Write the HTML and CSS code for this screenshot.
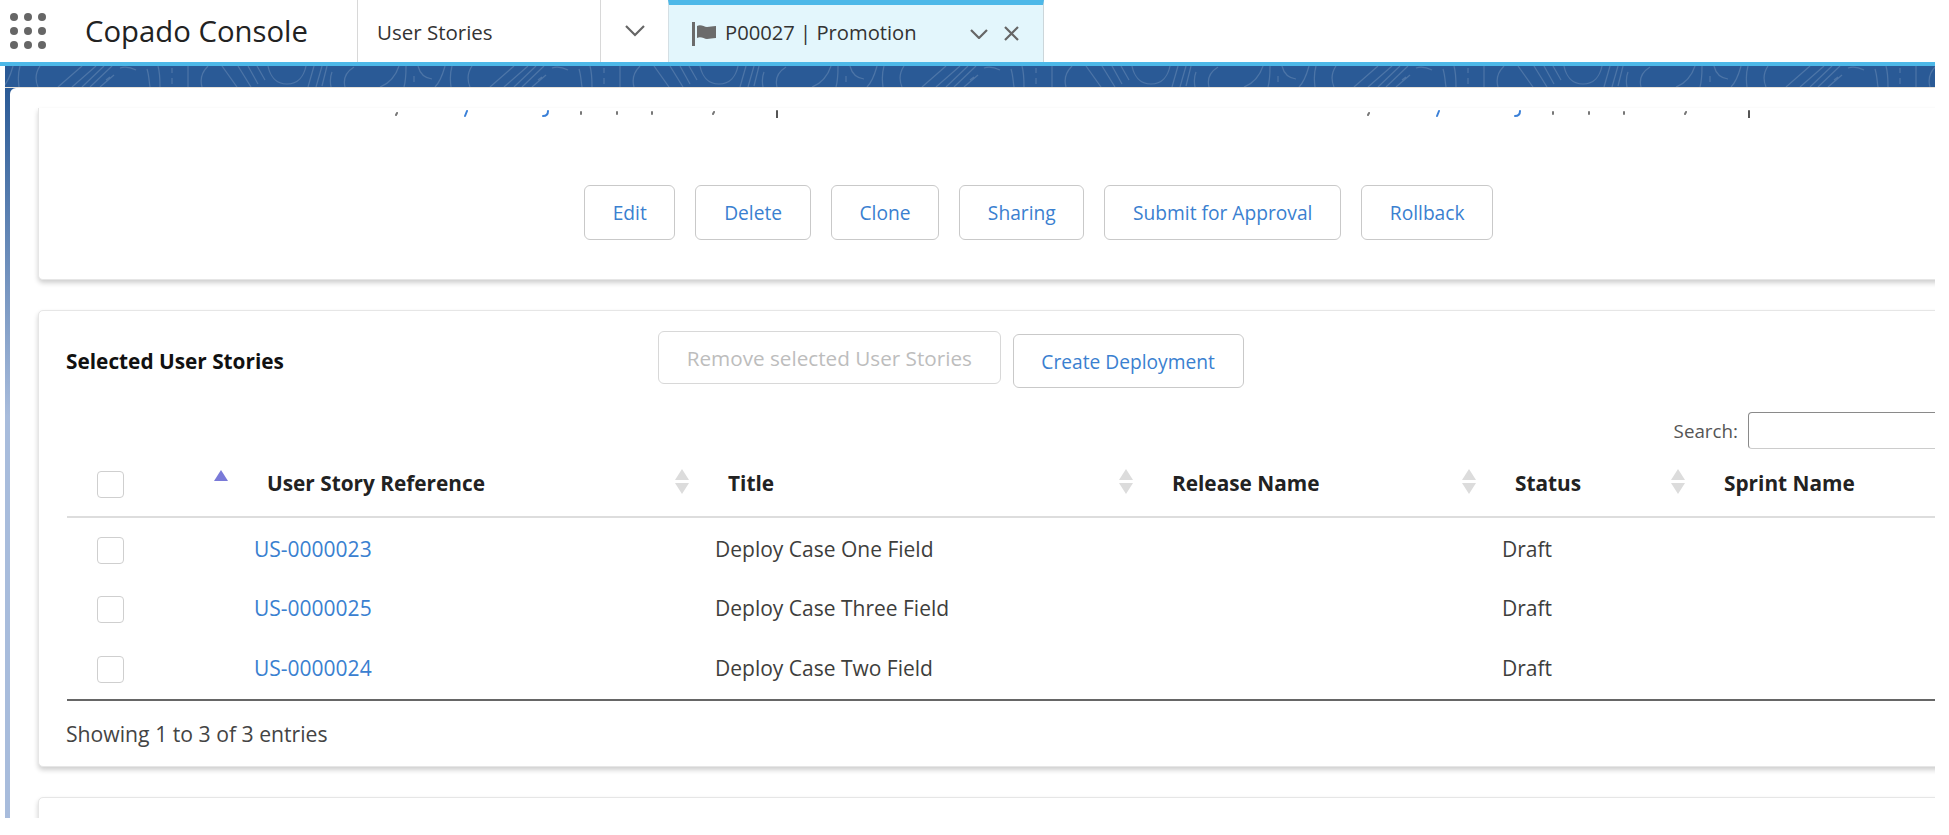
FILE: index.html
```html
<!DOCTYPE html>
<html lang="en">
<head>
  <meta charset="UTF-8">
  <title>P00027 | Promotion</title>
  <link rel="stylesheet" href="styles.css">
</head>
<body>
<div class="page">

  <!-- TAB BAR -->
  <div class="tabbar">
    <div class="brand">
      <svg class="launcher" width="38" height="36" viewBox="0 0 38 36" fill="#666">
        <circle cx="5" cy="4" r="4"/><circle cx="19" cy="4" r="4"/><circle cx="33" cy="4" r="4"/>
        <circle cx="5" cy="18" r="4"/><circle cx="19" cy="18" r="4"/><circle cx="33" cy="18" r="4"/>
        <circle cx="5" cy="32" r="4"/><circle cx="19" cy="32" r="4"/><circle cx="33" cy="32" r="4"/>
      </svg>
      <span class="app-name">Copado Console</span>
    </div>
    <div class="nav-tab">User Stories</div>
    <div class="nav-menu">
      <svg width="20" height="12" viewBox="0 0 20 12" fill="none" stroke="#666" stroke-width="2.2"><path d="M1 1l9 9 9-9"/></svg>
    </div>
    <div class="record-tab">
      <svg class="flag" width="25" height="24" viewBox="0 0 25 24">
        <rect x="0" y="0" width="3" height="24" fill="#6b6b6b"/>
        <path d="M5 4c4-2 7 1 10 1s5-1 9-1v12c-4 0-6 1-9 1s-6-3-10-1z" fill="#6b6b6b"/>
      </svg>
      <span class="record-title">P00027 | Promotion</span>
      <svg class="record-menu" width="18" height="10" viewBox="0 0 18 10" fill="none" stroke="#666" stroke-width="2.2"><path d="M1 1l8 8 8-8"/></svg>
      <svg width="15" height="15" viewBox="0 0 15 15" fill="none" stroke="#666" stroke-width="2.2"><path d="M1 1l13 13M14 1L1 14"/></svg>
    </div>
  </div>

  <!-- CONTOUR BAND -->
  <svg class="band" width="100%" height="21">
    <defs>
      <pattern id="contour" x="-5" width="432" height="21" patternUnits="userSpaceOnUse">
        <g fill="none" stroke="#fff" stroke-opacity=".16" stroke-width="1.2">
          <path d="M3 21c6-6 8-14 10-21M20 0c-2 7-2 14-1 21M40 0c-4 6-5 14-2 21"/>
          <path d="M58 21L82 0M72 21L96 0M82 21L104 0M90 21L112 0M100 21l14-12"/>
          <path d="M120 2c6-2 10-1 16 2M106 14l4-3"/>
          <path d="M147 3c2 6 2 12 3 18M158 0c2 7 2 14 2 21M172 2v5M172 12v6M188 0v21M208 0c-6 6-8 14-6 21"/>
          <path d="M222 0l15 21M238 0l13 21M248 0l10 18M257 0l8 14"/>
          <path d="M268 0c2 10 8 18 19 18s17-8 19-18"/>
          <path d="M308 21l6-21M316 21l6-21M322 20l5-20M332 6c-2 5-2 10-1 15M345 21c-2-8 1-15 9-20"/>
          <path d="M380 21c10-4 16-12 19-21M404 21c2-7 2-14 2-21M414 10v6"/>
          <path d="M418 0c2 8 7 12 14 13"/>
        </g>
      </pattern>
    </defs>
    <rect width="100%" height="21" fill="url(#contour)"/>
  </svg>

  <div class="workspace">
    <div class="content">

      <div class="card card-record">
        <!-- tails of the field line scrolled off above -->
        <svg class="tails" width="1800" height="10" viewBox="0 0 1800 10" fill="none" stroke-width="2" stroke-linecap="round">
          <g id="tails">
            <path d="M358 5l-1 2M542 4v2M578 4v2M613 4v2M675 4l-1 2" stroke="#777"/>
            <path d="M428 3l-2 5M509 3c0 3-2 5-5 5" stroke="#3a80d8"/>
            <path d="M738 3v7" stroke="#555"/>
          </g>
          <use href="#tails" x="972"/>
        </svg>
        <div class="record-actions">
          <button class="btn">Edit</button>
          <button class="btn">Delete</button>
          <button class="btn">Clone</button>
          <button class="btn">Sharing</button>
          <button class="btn">Submit for Approval</button>
          <button class="btn">Rollback</button>
        </div>
      </div>

      <div class="card card-stories">
        <div class="stories-head">
          <h2 class="stories-title">Selected User Stories</h2>
          <button class="btn btn-disabled" disabled>Remove selected User Stories</button>
          <button class="btn btn-create">Create Deployment</button>
        </div>
        <div class="search">
          <label for="storySearch">Search:</label>
          <input id="storySearch" type="text">
        </div>
        <table class="stories">
          <colgroup>
            <col class="col-check"><col class="col-ref"><col class="col-title">
            <col class="col-release"><col class="col-status"><col class="col-sprint">
          </colgroup>
          <thead>
            <tr>
              <th class="check sort-asc"><span class="box"></span></th>
              <th class="sortable">User Story Reference</th>
              <th class="sortable">Title</th>
              <th class="sortable">Release Name</th>
              <th class="sortable">Status</th>
              <th>Sprint Name</th>
            </tr>
          </thead>
          <tbody>
            <tr>
              <td class="check"><span class="box"></span></td>
              <td><a href="#">US-0000023</a></td>
              <td>Deploy Case One Field</td>
              <td></td>
              <td>Draft</td>
              <td></td>
            </tr>
            <tr>
              <td class="check"><span class="box"></span></td>
              <td><a href="#">US-0000025</a></td>
              <td>Deploy Case Three Field</td>
              <td></td>
              <td>Draft</td>
              <td></td>
            </tr>
            <tr>
              <td class="check"><span class="box"></span></td>
              <td><a href="#">US-0000024</a></td>
              <td>Deploy Case Two Field</td>
              <td></td>
              <td>Draft</td>
              <td></td>
            </tr>
          </tbody>
        </table>
        <div class="table-info">Showing 1 to 3 of 3 entries</div>
      </div>

      <div class="card card-next"></div>

    </div>
  </div>
</div>
</body>
</html>
```

FILE: styles.css
```css
* { margin: 0; padding: 0; box-sizing: border-box; }

body {
  background-color: #fff;
  font-family: "Open Sans", "Noto Sans", sans-serif;
  color: #3e3e3c;
}

.page {
  width: 1935px;
  height: 818px;
  overflow: hidden;
}

/* tab bar */
.tabbar {
  display: flex;
  height: 66px;
  border-bottom: 4px solid #4db8e8;
}

.brand {
  display: flex;
  align-items: center;
  width: 357px;
  padding-left: 9px;
}

.launcher { margin-right: 38px; }

.app-name {
  font-size: 29.3px;
  color: #222;
}

.nav-tab {
  display: flex;
  align-items: center;
  width: 243px;
  padding-left: 19px;
  padding-top: 1px;
  border-left: 1px solid #d8d8d8;
  font-size: 20.5px;
  color: #333;
}

.nav-menu {
  display: flex;
  align-items: center;
  justify-content: center;
  width: 68px;
  border-left: 1px solid #d8d8d8;
}

.record-tab {
  display: flex;
  align-items: center;
  width: 376px;
  padding-left: 23px;
  background-color: #e3f6fc;
  border-top: 5px solid #4db8e8;
  border-left: 1px solid #d4dfe4;
  border-right: 1px solid #ccd6da;
}

.flag { margin-right: 8px; }

.record-title {
  width: 245px;
  padding-bottom: 3px;
  font-size: 20.2px;
  color: #333;
}

.record-menu { margin-right: 16px; }

/* band under the tabs */
.band {
  display: block;
  background-color: #2a5a96;
  margin-left: 5px;
  width: calc(100% - 5px);
}

/* workspace */
.workspace {
  margin-left: 5px;
  padding-left: 5px;
  height: 731px;
  background: linear-gradient(to bottom, #2a5a96 0, #a8bcdc 45%);
  border-top: 1px solid #e8e2da;
}

.content {
  height: 100%;
  background-color: #fff;
  border-top-left-radius: 6px;
  padding: 20px 0 0 28px;
}

.card {
  margin-right: -20px;
  margin-bottom: 30px;
  background-color: #fff;
  border: 1px solid #e6e6e6;
  border-radius: 5px;
  box-shadow: 0 3px 5px #cfcfcf;
}

.card-record {
  height: 172px;
  border-top: none;
  border-top-left-radius: 0;
  border-top-right-radius: 0;
}

.tails { display: block; }

.record-actions {
  display: flex;
  gap: 20px;
  padding: 67px 0 0 545px;
}

.btn {
  height: 55px;
  padding: 0 27.7px;
  background-color: #fff;
  border: 1px solid #c9c9c9;
  border-radius: 6px;
  font-family: inherit;
  font-size: 19.2px;
  color: #3a80d0;
  cursor: pointer;
}

.btn-disabled {
  height: 53px;
  margin-right: 12px;
  font-size: 20.7px;
  color: #bdbdbd;
  border-color: #d8d8d8;
  cursor: default;
}

.btn-create {
  height: 54px;
  margin-top: 3px;
}

/* selected user stories */
.card-stories {
  height: 457px;
  padding-left: 27px;
}

.stories-head {
  display: flex;
  align-items: flex-start;
  padding-top: 20px;
}

.stories-title {
  width: 592px;
  padding-top: 16px;
  font-size: 20.8px;
  font-weight: 700;
  color: #111;
}

.search {
  display: flex;
  align-items: center;
  justify-content: flex-end;
  gap: 10px;
  height: 37px;
  margin-top: 24px;
  font-size: 18.8px;
  color: #555;
}

.search input {
  width: 206px;
  height: 37px;
  border: 1px solid #8a8a8a;
  border-bottom-color: #ccc;
  border-radius: 4px;
}

.stories {
  table-layout: fixed;
  width: 1888px;
  border-collapse: collapse;
  margin-left: 1px;
}

.col-check { width: 173px; }
.col-ref { width: 461px; }
.col-title { width: 444px; }
.col-release { width: 343px; }
.col-status { width: 209px; }
.col-sprint { width: 258px; }

.stories th {
  position: relative;
  height: 68px;
  padding-left: 27px;
  border-bottom: 2px solid #ddd;
  text-align: left;
  font-size: 20.8px;
  font-weight: 700;
  color: #222;
}

.stories td {
  height: 60px;
  padding-top: 2px;
  padding-left: 14px;
  font-size: 21px;
}

.stories tbody tr:last-child td {
  height: 63px;
  padding-bottom: 3px;
  border-bottom: 2px solid #666;
}

.stories a {
  color: #3a80d0;
  text-decoration: none;
}

.stories .check { padding-left: 30px; }

.box {
  display: block;
  width: 27px;
  height: 27px;
  margin-top: 3px;
  background-color: #fff;
  border: 1px solid #cfcfcf;
  border-radius: 4px;
}

/* sort arrows */
.sortable::before,
.sortable::after,
.sort-asc::before {
  content: "";
  position: absolute;
  right: 12px;
  border-left: 7px solid transparent;
  border-right: 7px solid transparent;
}

.sortable::before {
  top: 20px;
  border-bottom: 11px solid #dcdcdc;
}

.sortable::after {
  top: 34px;
  border-top: 11px solid #dcdcdc;
}

.sort-asc::before {
  top: 21px;
  border-bottom: 11px solid #7a7ad8;
}

.table-info {
  padding-top: 18px;
  font-size: 21.2px;
  color: #444;
}

.card-next { height: 60px; }
```
